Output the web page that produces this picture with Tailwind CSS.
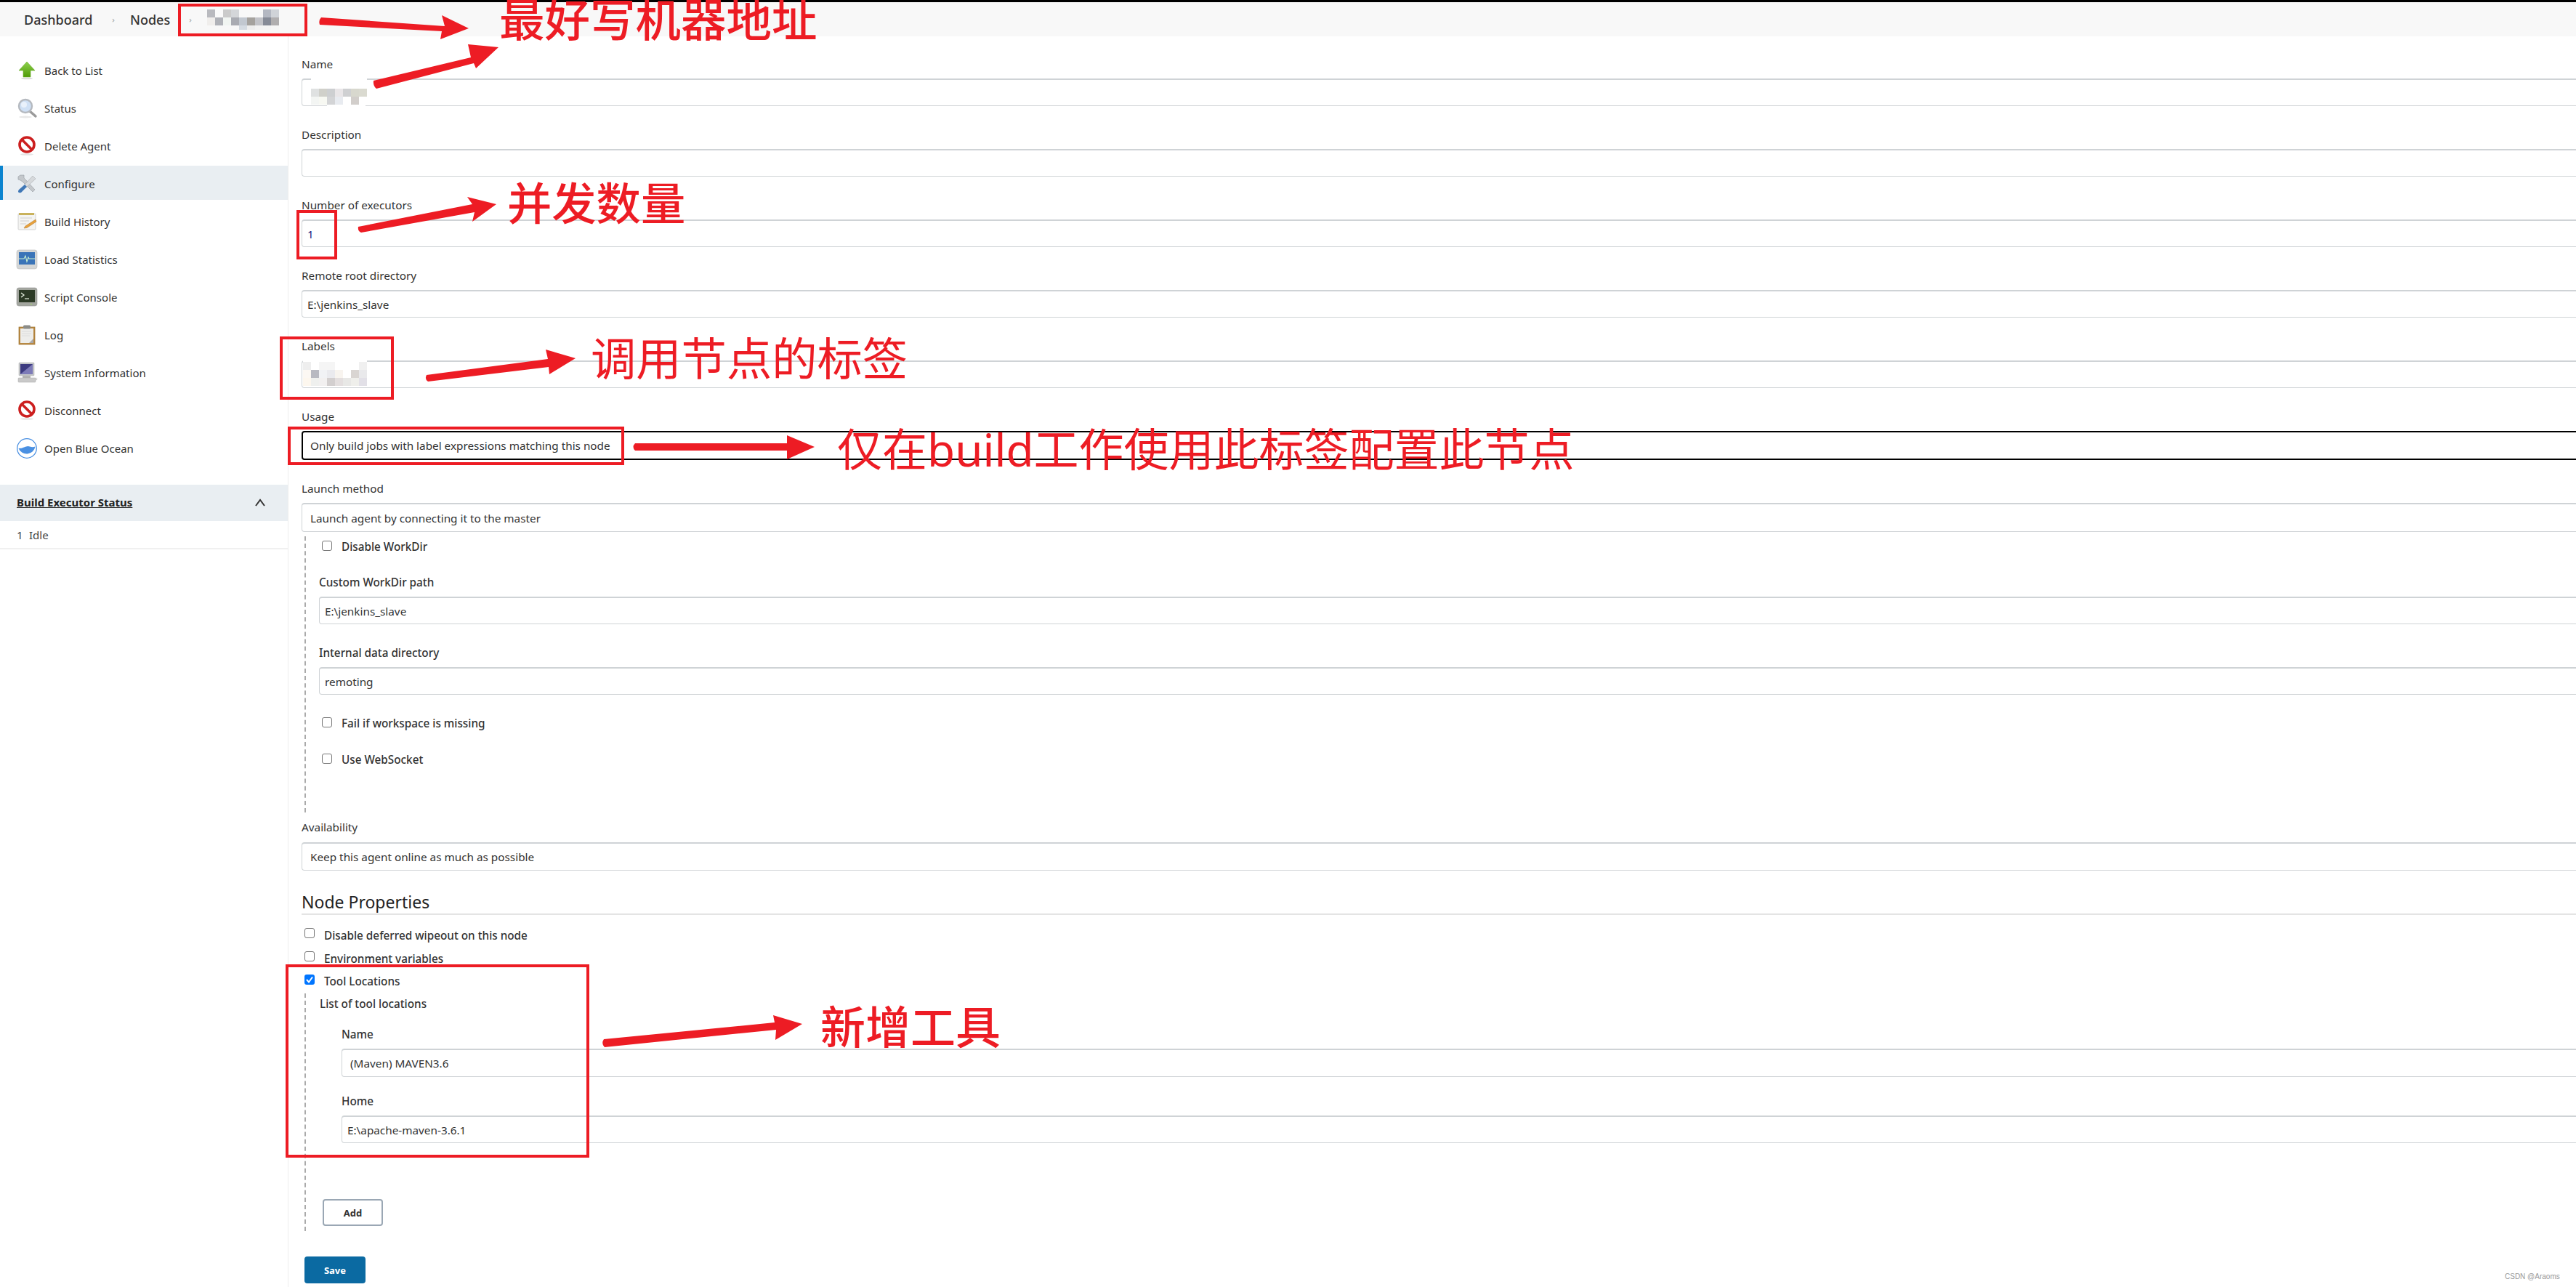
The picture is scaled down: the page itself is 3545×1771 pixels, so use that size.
<!DOCTYPE html>
<html lang="zh">
<head>
<meta charset="utf-8">
<script src="https://cdn.jsdelivr.net/npm/@tailwindcss/browser@4"></script>
</head>
<body class="bg-white">
<div class="relative w-[3545px] h-[1771px] overflow-hidden bg-white font-['Noto_Sans','Noto_Sans_CJK_SC',sans-serif] text-[15px] leading-[20px] text-[#333]">
  <div class="h-[3px] bg-black"></div>
  <header class="h-[47px] bg-[#f8f8f8] flex items-center text-[18px] font-medium text-[#333] pl-[33px]">
    <span>Dashboard</span>
    <span class="ml-[27px] mr-[21px] text-[#aaa] text-[11px]">›</span>
    <span>Nodes</span>
    <span class="ml-[26px] text-[#aaa] text-[11px]">›</span>
  </header>
  <div class="flex h-[1721px]">
    <aside class="w-[397px] shrink-0 border-r border-[#eeeeee] pt-[22px] text-[15px] text-[#333]">
      <nav class="flex flex-col">
        <a class="h-[47px] mb-[5px] pt-[2px] pl-[22px] flex items-center gap-[9px]"><svg class="w-[30px] h-[30px]" viewBox="0 0 30 30"><defs><linearGradient id="g1" x1="0" y1="0" x2="0" y2="1"><stop offset="0" stop-color="#8fd14f"/><stop offset="1" stop-color="#4e9a06"/></linearGradient></defs><path d="M15 3 L26 15 H20 V24 H10 V15 H4 Z" fill="url(#g1)" stroke="#6cae2a" stroke-width=".6"/><ellipse cx="15" cy="26" rx="8" ry="1.3" fill="#ddd"/></svg><span>Back to List</span></a>
        <a class="h-[47px] mb-[5px] pt-[2px] pl-[22px] flex items-center gap-[9px]"><svg class="w-[30px] h-[30px]" viewBox="0 0 30 30"><line x1="19" y1="19" x2="27" y2="26" stroke="#9a9a9a" stroke-width="3.4" stroke-linecap="round"/><circle cx="13" cy="12" r="9" fill="#cfe0f5" stroke="#b5b9bf" stroke-width="2.4"/><circle cx="11" cy="10" r="4" fill="#e9f1fb"/><ellipse cx="13" cy="27" rx="9" ry="1.5" fill="#e8e8e8"/></svg><span>Status</span></a>
        <a class="h-[47px] mb-[5px] pt-[2px] pl-[22px] flex items-center gap-[9px]"><svg class="w-[30px] h-[30px]" viewBox="0 0 30 30"><circle cx="15" cy="13" r="10" fill="#fff" stroke="#cc1f1f" stroke-width="3.6"/><line x1="8" y1="6" x2="22" y2="20" stroke="#cc1f1f" stroke-width="3.6"/><ellipse cx="15" cy="26.5" rx="9" ry="1.3" fill="#e5e5e5"/></svg><span>Delete Agent</span></a>
        <a class="h-[47px] mb-[5px] pt-[2px] pl-[18px] flex items-center gap-[9px] bg-[#e9eef2] border-l-4 border-[#0b84cf]"><svg class="w-[30px] h-[30px]" viewBox="0 0 30 30"><path d="M6 3 L11 3 L11 7 L13 9 L26 23 L23 26 L9 12 L6 10 L3 9 L3 5 Z" fill="#c4c8cc" stroke="#9fa4a9" stroke-width=".7"/><path d="M23 4 L27 8 L14 20 L11 17 Z" fill="#d6d9dc" stroke="#a7abaf" stroke-width=".6"/><path d="M12 16 L15 19 L7 27 Q4 28 3 26 Q3 24 4 23 Z" fill="#3f77b6"/></svg><span>Configure</span></a>
        <a class="h-[47px] mb-[5px] pt-[2px] pl-[22px] flex items-center gap-[9px]"><svg class="w-[30px] h-[30px]" viewBox="0 0 30 30"><rect x="3" y="4" width="24" height="22" rx="1" fill="#f4f4f2" stroke="#c9c9c9" stroke-width=".8"/><rect x="4" y="3" width="21" height="3" fill="#c9b25c"/><path d="M6 10 H22 M6 14 H18 M6 18 H14" stroke="#cfcfcf" stroke-width="1.2"/><path d="M27 12 L13 21 L11 24 L15 23.5 L28 15 Z" fill="#e9a23b" stroke="#a9702a" stroke-width=".5"/></svg><span>Build History</span></a>
        <a class="h-[47px] mb-[5px] pt-[2px] pl-[22px] flex items-center gap-[9px]"><svg class="w-[30px] h-[30px]" viewBox="0 0 30 30"><rect x="1" y="2" width="28" height="26" rx="3" fill="#d4d6d6" stroke="#bdbdbd" stroke-width=".6"/><rect x="4" y="5" width="22" height="17" fill="#3a74b8"/><path d="M4 14 H11 L13 10 L15 18 L17 12 L18 14 H26" fill="none" stroke="#c8f0d0" stroke-width="1.1"/></svg><span>Load Statistics</span></a>
        <a class="h-[47px] mb-[5px] pt-[2px] pl-[22px] flex items-center gap-[9px]"><svg class="w-[30px] h-[30px]" viewBox="0 0 30 30"><rect x="1" y="2" width="28" height="25" rx="3" fill="#a3a69f" stroke="#999" stroke-width=".6"/><rect x="4" y="5" width="22" height="17" fill="#2c3a26"/><path d="M7 9 L11 12 L7 15" fill="none" stroke="#e6efe0" stroke-width="1.3"/><path d="M12 17 H18" stroke="#e6efe0" stroke-width="1.2"/><circle cx="21" cy="24.5" r=".8" fill="#a5e05f"/></svg><span>Script Console</span></a>
        <a class="h-[47px] mb-[5px] pt-[2px] pl-[22px] flex items-center gap-[9px]"><svg class="w-[30px] h-[30px]" viewBox="0 0 30 30"><rect x="4" y="4" width="22" height="24" fill="#b98a45" stroke="#a0742f" stroke-width=".7"/><rect x="6" y="6" width="18" height="20" fill="#ededeb"/><path d="M8 10 H21 M8 13 H21 M8 16 H19" stroke="#dcdcdc" stroke-width="1"/><path d="M24 20 L18 26 H24 Z" fill="#a9a9a9"/><rect x="10" y="1.5" width="10" height="5" rx="1.5" fill="#8c8c88"/></svg><span>Log</span></a>
        <a class="h-[47px] mb-[5px] pt-[2px] pl-[22px] flex items-center gap-[9px]"><svg class="w-[30px] h-[30px]" viewBox="0 0 30 30"><rect x="4" y="1" width="21" height="18" rx="1" fill="#c5c7c9" stroke="#a8a8a8" stroke-width=".5"/><rect x="6" y="3" width="17" height="14" fill="#3c3a80"/><path d="M6 17 L23 3 V17 Z" fill="#7d7bb8"/><rect x="9" y="19" width="11" height="3" fill="#b3b3b3"/><rect x="3" y="22" width="24" height="6" rx="1" fill="#c9c9c9" stroke="#aaa" stroke-width=".5"/><path d="M27 22 Q31 24 27 25" fill="none" stroke="#bbb"/></svg><span>System Information</span></a>
        <a class="h-[47px] mb-[5px] pt-[2px] pl-[22px] flex items-center gap-[9px]"><svg class="w-[30px] h-[30px]" viewBox="0 0 30 30"><circle cx="15" cy="13" r="10" fill="#fff" stroke="#cc1f1f" stroke-width="3.6"/><line x1="8" y1="6" x2="22" y2="20" stroke="#cc1f1f" stroke-width="3.6"/><ellipse cx="15" cy="26.5" rx="9" ry="1.3" fill="#e5e5e5"/></svg><span>Disconnect</span></a>
        <a class="h-[47px] mb-[5px] pt-[2px] pl-[22px] flex items-center gap-[9px]"><svg class="w-[30px] h-[30px]" viewBox="0 0 30 30"><circle cx="15" cy="15" r="13.3" fill="#fff" stroke="#4a90e2" stroke-width="1.3"/><path d="M3.5 15 Q8 15 11 13.5 Q16 11 19 12.5 Q23 14 26.5 12.5 A12 12 0 0 1 3.5 15 Z" fill="#4a90e2"/></svg><span>Open Blue Ocean</span></a>
      </nav>
      <div class="mt-[23px] h-[50px] bg-[#e9eef2] flex items-center justify-between pl-[23px] pr-[30px]">
        <span class="font-bold text-[#222] underline -mt-[2px]">Build Executor Status</span>
        <svg class="w-[16px] h-[16px]" viewBox="0 0 16 16"><path d="M2 12 L8 4 L14 12" fill="none" stroke="#333" stroke-width="2"/></svg>
      </div>
      <div class="h-[39px] border-b-2 border-[#f0f0f0] pl-[23px] flex items-center text-[#444]"><span class="w-[17px]">1</span><span>Idle</span></div>
    </aside>
    <main class="w-[3300px] shrink-0 pl-[18px] pt-[28px] text-[15.3px]">
      <div class="mb-[29px]"><label class="block h-[20px] mb-[10px]">Name</label><div class="h-[38px] border border-t-2 border-[#cfd3d6] rounded-[4px]"></div></div>
      <div class="mb-[29px]"><label class="block h-[20px] mb-[10px]">Description</label><div class="h-[38px] border border-t-2 border-[#cfd3d6] rounded-[4px]"></div></div>
      <div class="mb-[29px]"><label class="block h-[20px] mb-[10px]">Number of executors</label><div class="h-[38px] border border-t-2 border-[#cfd3d6] rounded-[4px] px-[7px] flex items-center text-[#1a1a80]">1</div></div>
      <div class="mb-[29px]"><label class="block h-[20px] mb-[10px]">Remote root directory</label><div class="h-[38px] border border-t-2 border-[#cfd3d6] rounded-[4px] px-[7px] flex items-center">E:\jenkins_slave</div></div>
      <div class="mb-[29px]"><label class="block h-[20px] mb-[10px]">Labels</label><div class="h-[38px] border border-t-2 border-[#cfd3d6] rounded-[4px]"></div></div>
      <div class="mb-[29px]"><label class="block h-[20px] mb-[10px]">Usage</label><div class="h-[40px] border-2 border-black rounded-[4px] px-[10px] flex items-center">Only build jobs with label expressions matching this node</div></div>
      <div><label class="block h-[20px] mb-[10px]">Launch method</label><div class="h-[40px] border border-t-2 border-[#cfd3d6] rounded-[4px] px-[11px] flex items-center">Launch agent by connecting it to the master</div></div>
      <div class="ml-[4px] mt-[6px] h-[380px] border-l-2 border-dashed border-[#aaa] pl-[18px]">
        <div class="h-[27px] flex items-center gap-[13px] pl-[4px]"><span class="w-[14px] h-[14px] -mt-[2px] border border-[#777] rounded-[3px] bg-white"></span><span class="font-medium">Disable WorkDir</span></div>
        <label class="block h-[20px] mt-[26px] mb-[10px] font-medium">Custom WorkDir path</label><div class="h-[38px] border border-t-2 border-[#cfd3d6] rounded-[4px] px-[7px] flex items-center">E:\jenkins_slave</div>
        <label class="block h-[20px] mt-[29px] mb-[10px] font-medium">Internal data directory</label><div class="h-[38px] border border-t-2 border-[#cfd3d6] rounded-[4px] px-[7px] flex items-center">remoting</div>
        <div class="h-[20px] mt-[29px] flex items-center gap-[13px] pl-[4px]"><span class="w-[14px] h-[14px] -mt-[2px] border border-[#777] rounded-[3px] bg-white"></span><span class="font-medium">Fail if workspace is missing</span></div>
        <div class="h-[20px] mt-[30px] flex items-center gap-[13px] pl-[4px]"><span class="w-[14px] h-[14px] -mt-[2px] border border-[#777] rounded-[3px] bg-white"></span><span class="font-medium">Use WebSocket</span></div>
      </div>
      <div class="mt-[10px]"><label class="block h-[20px] mb-[11px]">Availability</label><div class="h-[39px] border border-t-2 border-[#cfd3d6] rounded-[4px] px-[11px] flex items-center">Keep this agent online as much as possible</div></div>
      <h2 class="mt-[27px] h-[34px] border-b-2 border-[#e4e4e4] text-[23px] leading-[33px] font-normal text-[#222]">Node Properties</h2>
      <div class="mt-[18px] h-[20px] flex items-center gap-[13px] pl-[4px]"><span class="w-[14px] h-[14px] -mt-[6px] border border-[#777] rounded-[3px] bg-white"></span><span class="font-medium">Disable deferred wipeout on this node</span></div>
      <div class="mt-[12px] h-[20px] flex items-center gap-[13px] pl-[4px]"><span class="w-[14px] h-[14px] -mt-[6px] border border-[#777] rounded-[3px] bg-white"></span><span class="font-medium">Environment variables</span></div>
      <div class="mt-[11px] h-[20px] flex items-center gap-[13px] pl-[4px]"><svg class="w-[14px] h-[14px] -mt-[4px]" viewBox="0 0 14 14"><rect width="14" height="14" rx="3" fill="#0075ff"/><path d="M3 7 L6 10.5 L11 3.5" fill="none" stroke="#fff" stroke-width="2"/></svg><span class="font-medium">Tool Locations</span></div>
      <div class="ml-[4px] mt-[7px] h-[327px] border-l-2 border-dashed border-[#aaa] pl-[19px]">
        <div class="h-[20px] mt-[4px] pt-[4px] font-medium">List of tool locations</div>
        <div class="pl-[30px] mt-[26px]">
          <label class="block h-[20px] mb-[10px] font-medium">Name</label><div class="h-[39px] border border-t-2 border-[#cfd3d6] rounded-[4px] px-[11px] flex items-center">(Maven) MAVEN3.6</div>
          <label class="block h-[20px] mt-[23px] mb-[10px] font-medium">Home</label><div class="h-[38px] border border-t-2 border-[#cfd3d6] rounded-[4px] px-[7px] flex items-center">E:\apache-maven-3.6.1</div>
        </div>
        <div class="mt-[77px] ml-[4px] w-[83px] h-[37px] border-2 border-[#9aa7b4] rounded-[4px] flex items-center justify-center font-bold text-[13px] text-[#333]">Add</div>
      </div>
      <div class="mt-[35px] ml-[4px] w-[84px] h-[37px] bg-[#0b6aa2] rounded-[4px] flex items-center justify-center font-bold text-[13px] text-white">Save</div>
    </main>
  </div>

  <!-- pixelated blurs -->
  <div class="absolute left-[285px] top-[13px] grid grid-cols-[repeat(9,11px)] auto-rows-[11px]">
    <i class="bg-[#b9babf]"></i><i class="bg-[#fafafa]"></i><i class="bg-[#cbcbcb]"></i><i class="bg-[#d4d6d9]"></i><i></i><i></i><i></i><i class="bg-[#b4b8c2]"></i><i class="bg-[#d0d3d8]"></i>
    <i class="bg-[#f0eeec]"></i><i class="bg-[#b0b2b8]"></i><i class="bg-[#f1f5f2]"></i><i class="bg-[#a9abb2]"></i><i class="bg-[#c2c8d0]"></i><i class="bg-[#a5a29e]"></i><i class="bg-[#c2c3c8]"></i><i class="bg-[#868b97]"></i><i class="bg-[#b0aeaf]"></i>
    <i></i><i></i><i></i><i></i><i class="bg-[#d5dbe2] h-[6px]"></i><i class="bg-[#eeeeee] h-[6px]"></i><i class="bg-[#f3f3f3] h-[6px]"></i><i class="bg-[#f4f4f4] h-[6px]"></i><i class="bg-[#f6f6f6] h-[6px]"></i>
  </div>
  <div class="absolute left-[428px] top-[107px] w-[77px] h-[15px] bg-white"></div>
  <div class="absolute left-[450px] top-[144px] w-[53px] h-[4px] bg-white"></div>
  <div class="absolute left-[428px] top-[122px] grid grid-cols-[repeat(7,11px)] auto-rows-[11px]">
    <i class="bg-[#dfe1e1]"></i><i class="bg-[#d0d0ca]"></i><i class="bg-[#cdcfd1]"></i><i class="bg-[#e9e6e8]"></i><i class="bg-[#cfd0d2]"></i><i class="bg-[#d8d8ce]"></i><i class="bg-[#dadad0]"></i>
    <i class="bg-[#f3f5f3]"></i><i class="bg-[#f7f8f2]"></i><i class="bg-[#d3d4d6]"></i><i class="bg-[#e8ebf0]"></i><i class="bg-white"></i><i class="bg-[#d2cecb]"></i><i class="bg-white"></i>
  </div>
  <div class="absolute left-[417px] top-[495px] w-[88px] h-[3px] bg-white"></div>
  <div class="absolute left-[417px] top-[498px] grid grid-cols-[repeat(8,11px)] auto-rows-[11px]">
    <i class="bg-[#eeeeee]"></i><i class="bg-white"></i><i class="bg-[#f5f5f5]"></i><i class="bg-[#f5f5f5]"></i><i class="bg-white"></i><i class="bg-white"></i><i class="bg-white"></i><i class="bg-[#f0f0f0]"></i>
    <i class="bg-[#fcf8f3]"></i><i class="bg-[#b8b9c1]"></i><i class="bg-[#f1f2f5]"></i><i class="bg-[#eaeaee]"></i><i class="bg-[#f8f4ef]"></i><i class="bg-white"></i><i class="bg-[#d9d5d2]"></i><i class="bg-[#e9e9eb]"></i>
    <i class="bg-[#fdf7ee]"></i><i class="bg-[#eff0ee]"></i><i class="bg-[#f2f0f0]"></i><i class="bg-[#d3cfcf]"></i><i class="bg-[#e4dfdf]"></i><i class="bg-[#e8e8e6]"></i><i class="bg-[#efefeb]"></i><i class="bg-[#e2e0e7]"></i>
  </div>

  <!-- annotations -->
  <svg class="absolute inset-0 w-[3545px] h-[1771px] pointer-events-none" viewBox="0 0 3545 1771">
    <g fill="none" stroke="#ed1c24" stroke-width="4">
      <rect x="247" y="7" width="174" height="41"/>
      <rect x="410" y="291" width="52" height="64"/>
      <rect x="387" y="465" width="153" height="83"/>
      <rect x="398" y="589" width="459" height="49"/>
      <rect x="395" y="1329" width="414" height="262"/>
    </g>
    <g fill="#ed1c24">
      <path d="M442 24 L612 36 L608 21 L645 39 L606 54 L608 43 L440 34 Q438 28 442 24 Z"/>
      <path d="M514 111 L648 79 L644 61 L686 65 L655 94 L652 87 L518 122 Q513 118 514 111 Z"/>
      <path d="M493 312 L650 281 L643 271 L683 281 L650 305 L653 292 L497 320 Q492 318 493 312 Z"/>
      <path d="M587 516 L754 494 L751 481 L792 493 L756 515 L755 505 L589 525 Q584 522 587 516 Z"/>
      <path d="M874 610 H1083 V599 L1121 615 L1083 632 V620 H874 Q869 615 874 610 Z"/>
      <path d="M831 1430 L1066 1407 L1064 1397 L1104 1409 L1067 1431 L1068 1417 L832 1441 Q827 1436 831 1430 Z"/>
    </g>
  </svg>
  <div class="absolute left-[687px] top-0 text-[62.5px] leading-[53px] font-medium text-[#ed1c24] whitespace-nowrap">最好写机器地址</div>
  <div class="absolute left-[698px] top-[237px] text-[61.3px] leading-[84px] font-medium text-[#ed1c24] whitespace-nowrap">并发数量</div>
  <div class="absolute left-[813px] top-[451px] text-[62.3px] leading-[84px] text-[#ed1c24] whitespace-nowrap">调用节点的标签</div>
  <div class="absolute left-[1152px] top-[576px] text-[62px] leading-[84px] text-[#ed1c24] whitespace-nowrap">仅在build工作使用此标签配置此节点</div>
  <div class="absolute left-[1129px] top-[1371px] text-[62px] leading-[84px] font-medium text-[#ed1c24] whitespace-nowrap">新增工具</div>
  <div class="absolute left-[3447px] top-[1750px] text-[10px] leading-[14px] text-[#999] font-['Liberation_Sans',sans-serif]">CSDN @Araoms</div>
</div>
</body>
</html>
